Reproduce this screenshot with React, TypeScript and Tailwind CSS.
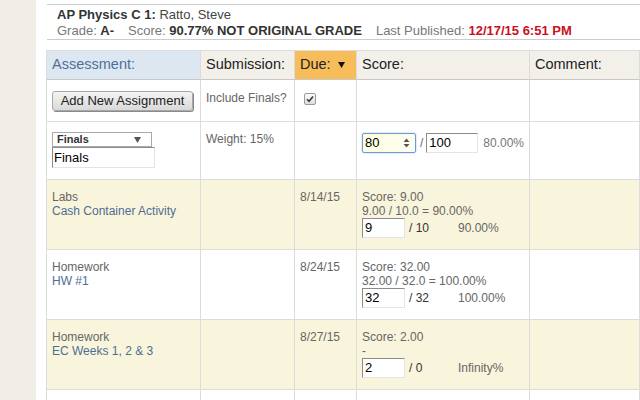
import React from "react";

const cellBase = "border-r border-b border-[#dcdcdc] px-[5px]";

function Checkbox() {
  return (
    <div className="ml-[4px] mt-[2px] flex h-[12px] w-[12px] items-center justify-center rounded-[2px] border border-[#9a9a9a] bg-gradient-to-b from-[#fdfdfd] to-[#dedede]">
      <svg width="8" height="8" viewBox="0 0 8 8">
        <path d="M1 4.2 L3.1 6.3 L7 1.6" fill="none" stroke="#3a3a3a" strokeWidth="1.6" />
      </svg>
    </div>
  );
}

function InsetInput({ value, w }: { value: string; w: string }) {
  return (
    <div
      className={`${w} h-[20px] border border-t-[#8c8c8c] border-l-[#8c8c8c] border-r-[#e4e4e4] border-b-[#e4e4e4] bg-white pl-[2px] text-[13px] leading-[18px] text-black`}
    >
      {value}
    </div>
  );
}

function DataRow({
  bg,
  cat,
  name,
  due,
  l1,
  l2,
  val,
  max,
  pct,
}: {
  bg: string;
  cat: string;
  name: string;
  due: string;
  l1: string;
  l2: string;
  val: string;
  max: string;
  pct: string;
}) {
  const c = `${cellBase} ${bg} h-[70px] pt-[10px] text-[12px] leading-[14px]`;
  return (
    <>
      <div className={c}>
        <div className="text-[#666]">{cat}</div>
        <div className="text-[#4d6e94]">{name}</div>
      </div>
      <div className={c} />
      <div className={`${c} text-[#666]`}>{due}</div>
      <div className={c}>
        <div className="text-[#666]">{l1}</div>
        <div className="text-[#666]">{l2}</div>
        <div className="flex items-center">
          <InsetInput value={val} w="w-[43px]" />
          <span className="ml-[4px] w-[49px] text-[12px] text-[#333]">{max}</span>
          <span className="text-[12px] text-[#666]">{pct}</span>
        </div>
      </div>
      <div className={c} />
    </>
  );
}

export default function App() {
  return (
    <div className="flex h-[400px] w-[640px] overflow-hidden bg-white font-['Liberation_Sans',Arial,Helvetica,sans-serif]">
      <div className="w-[36px] shrink-0 bg-[#f1eee8]" />
      <div className="min-w-0 flex-1 pl-[10px] pt-[4px]">
        {/* Course header */}
        <div className="ml-[1px] border-t border-b border-[#cccccc] pb-0 pl-[10px] pt-[2px] text-[13px] leading-[16px]">
          <div className="text-[#444]">
            <span className="font-bold text-[#333]">AP Physics C 1:</span> Ratto, Steve
          </div>
          <div className="text-[#777]">
            Grade: <span className="font-bold text-[#333]">A-</span>
            <span className="ml-[14px]">Score: </span>
            <span className="font-bold text-[#333]">90.77% NOT ORIGINAL GRADE</span>
            <span className="ml-[14px]">Last Published: </span>
            <span className="font-bold text-[#c8101e]">12/17/15 6:51 PM</span>
          </div>
        </div>

        {/* Table */}
        <div className="mt-[10px] grid grid-cols-[154px_94px_62px_173px_1fr] border-l border-t border-[#dcdcdc]">
          {/* header row */}
          <div className={`${cellBase} flex h-[29px] items-center border-b-[#c8c8c8] bg-[#dde7f1] text-[14.5px] text-[#4e7098]`}>
            Assessment:
          </div>
          <div className={`${cellBase} flex h-[29px] items-center border-b-[#c8c8c8] bg-[#f3f0ea] text-[14.5px] text-[#222]`}>
            Submission:
          </div>
          <div className={`${cellBase} flex h-[29px] items-center border-b-[#c8c8c8] bg-[#f7bd5a] text-[14.5px] text-[#222]`}>
            Due:
            <svg className="ml-[7px]" width="7" height="6" viewBox="0 0 7 6">
              <path d="M0 0 L7 0 L3.5 6 Z" fill="#111" />
            </svg>
          </div>
          <div className={`${cellBase} flex h-[29px] items-center border-b-[#c8c8c8] bg-[#f3f0ea] text-[14.5px] text-[#222]`}>
            Score:
          </div>
          <div className={`${cellBase} flex h-[29px] items-center border-b-[#c8c8c8] bg-[#f3f0ea] text-[14.5px] text-[#222]`}>
            Comment:
          </div>

          {/* row 1 */}
          <div className={`${cellBase} h-[42px] pt-[11px]`}>
            <div className="flex h-[20px] w-[141px] items-center justify-center rounded-[3px] border border-[#a8a8a8] bg-gradient-to-b from-[#f4f4f4] to-[#d9d9d9] text-[13px] text-[#222] shadow-[1px_1px_0_#8a8a8a]">
              Add New Assignment
            </div>
          </div>
          <div className={`${cellBase} h-[42px] pt-[11px] text-[12px] leading-[14px] text-[#666]`}>
            Include Finals?
          </div>
          <div className={`${cellBase} h-[42px] pt-[11px]`}>
            <Checkbox />
          </div>
          <div className={`${cellBase} h-[42px]`} />
          <div className={`${cellBase} h-[42px]`} />

          {/* row 2 */}
          <div className={`${cellBase} h-[58px] pt-[10px]`}>
            <div className="flex h-[15px] w-[100px] items-center justify-between border border-[#aaaaaa] bg-white pl-[4px] pr-[10px] text-[11px] font-bold leading-[13px] text-[#333]">
              <span>Finals</span>
              <svg width="7" height="6" viewBox="0 0 7 6">
                <path d="M0 0 L7 0 L3.5 6 Z" fill="#555" />
              </svg>
            </div>
            <div className="h-[21px] w-[103px] border border-t-[#8c8c8c] border-l-[#8c8c8c] border-r-[#e4e4e4] border-b-[#e4e4e4] bg-white pl-[1px] text-[13px] leading-[19px] text-black">
              Finals
            </div>
          </div>
          <div className={`${cellBase} h-[58px] pt-[10px] text-[12px] leading-[14px] text-[#666]`}>
            Weight: 15%
          </div>
          <div className={`${cellBase} h-[58px]`} />
          <div className={`${cellBase} h-[58px] pt-[11px]`}>
            <div className="flex items-center">
              <div className="flex h-[20px] w-[54px] items-center justify-between rounded-[2px] border border-[#6f9ad6] bg-gradient-to-r from-[#ffffe0] to-[#fdfdf3] pl-[2px] pr-[5px] text-[13px] text-black shadow-[0_0_2px_#9cc0ee]">
                <span>80</span>
                <svg width="7" height="10" viewBox="0 0 7 10">
                  <path d="M0.5 4 L3.5 0.5 L6.5 4 Z M0.5 6 L3.5 9.5 L6.5 6 Z" fill="#555" />
                </svg>
              </div>
              <span className="ml-[4px] text-[12px] text-[#666]">/</span>
              <div className="ml-[3px]">
                <InsetInput value="100" w="w-[52px]" />
              </div>
              <span className="ml-[5px] text-[12px] text-[#777]">80.00%</span>
            </div>
          </div>
          <div className={`${cellBase} h-[58px]`} />

          <DataRow
            bg="bg-[#f9f5dc]"
            cat="Labs"
            name="Cash Container Activity"
            due="8/14/15"
            l1="Score: 9.00"
            l2="9.00 / 10.0 = 90.00%"
            val="9"
            max="/ 10"
            pct="90.00%"
          />
          <DataRow
            bg="bg-white"
            cat="Homework"
            name="HW #1"
            due="8/24/15"
            l1="Score: 32.00"
            l2="32.00 / 32.0 = 100.00%"
            val="32"
            max="/ 32"
            pct="100.00%"
          />
          <DataRow
            bg="bg-[#f9f5dc]"
            cat="Homework"
            name="EC Weeks 1, 2 & 3"
            due="8/27/15"
            l1="Score: 2.00"
            l2="-"
            val="2"
            max="/ 0"
            pct="Infinity%"
          />

          {/* partial next row */}
          <div className={`${cellBase} h-[30px]`} />
          <div className={`${cellBase} h-[30px]`} />
          <div className={`${cellBase} h-[30px]`} />
          <div className={`${cellBase} h-[30px]`} />
          <div className={`${cellBase} h-[30px]`} />
        </div>
      </div>
    </div>
  );
}
